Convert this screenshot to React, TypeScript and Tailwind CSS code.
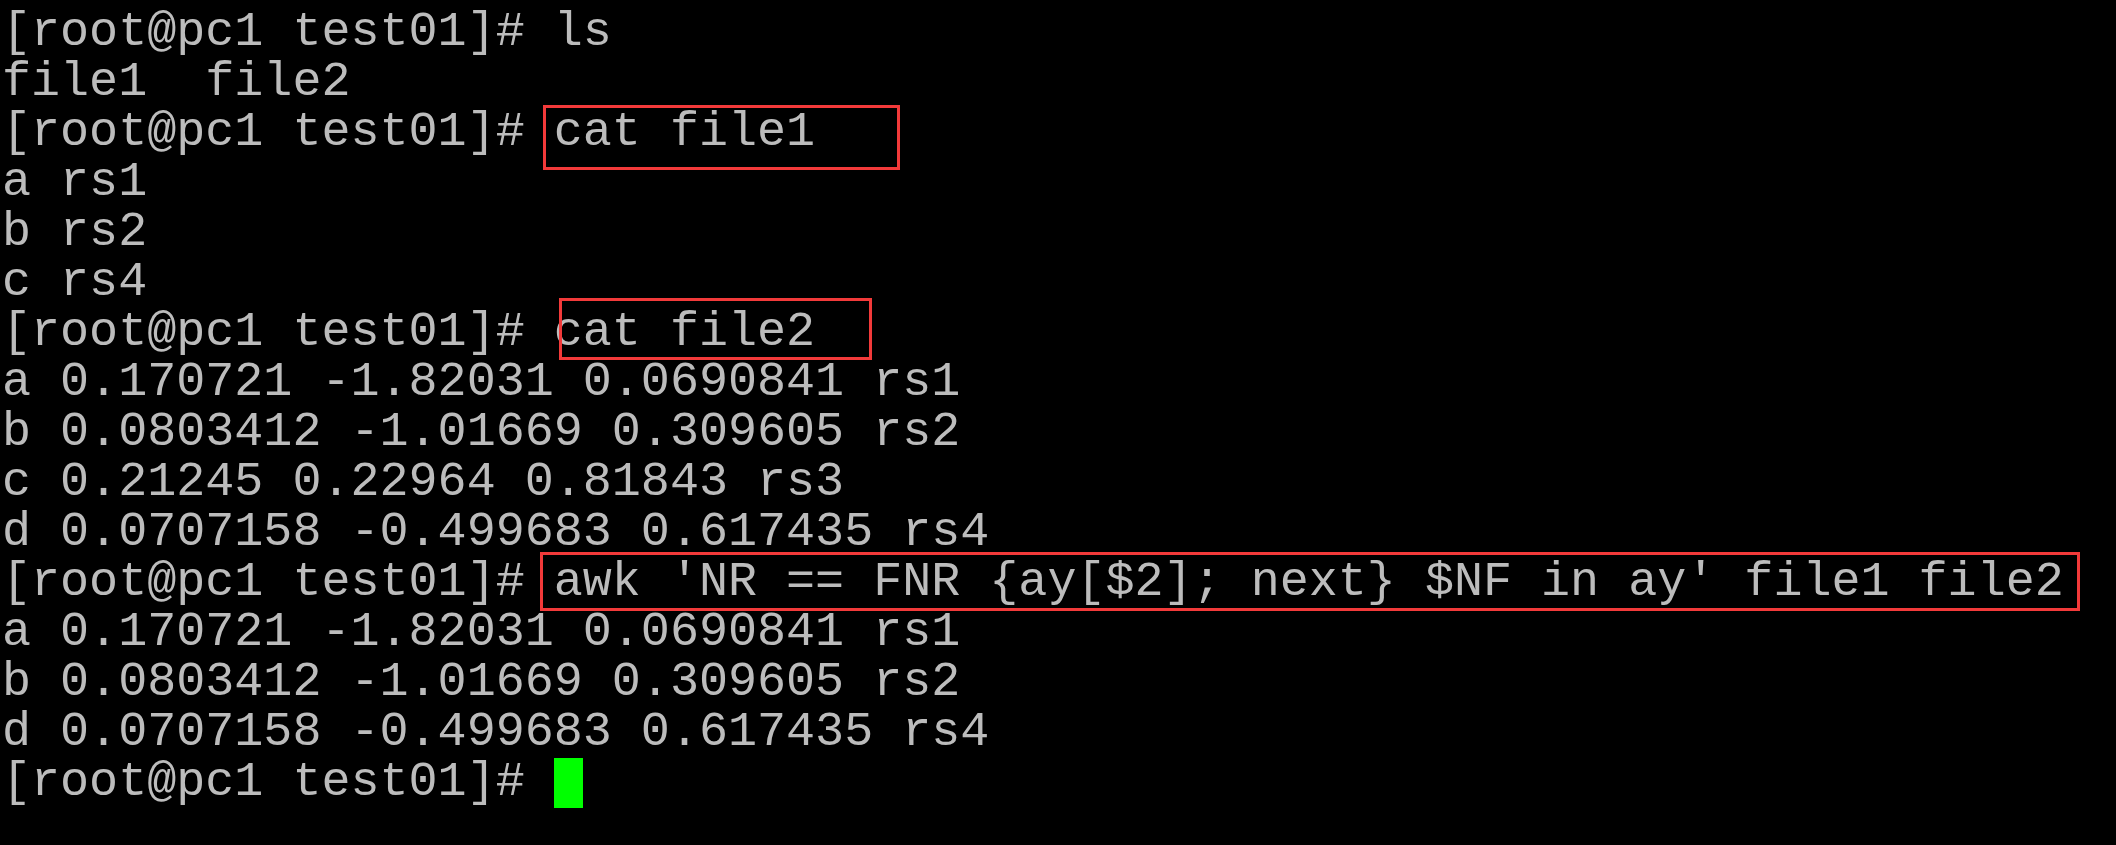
const lines = [
  "[root@pc1 test01]# ls",
  "file1  file2",
  "[root@pc1 test01]# cat file1",
  "a rs1",
  "b rs2",
  "c rs4",
  "[root@pc1 test01]# cat file2",
  "a 0.170721 -1.82031 0.0690841 rs1",
  "b 0.0803412 -1.01669 0.309605 rs2",
  "c 0.21245 0.22964 0.81843 rs3",
  "d 0.0707158 -0.499683 0.617435 rs4",
  "[root@pc1 test01]# awk 'NR == FNR {ay[$2]; next} $NF in ay' file1 file2",
  "a 0.170721 -1.82031 0.0690841 rs1",
  "b 0.0803412 -1.01669 0.309605 rs2",
  "d 0.0707158 -0.499683 0.617435 rs4",
];

export default function App() {
  return (
    <div className="w-[2116px] h-[845px] bg-black overflow-hidden">
      <div className="relative pt-[8px] pl-[2px] font-['Liberation_Mono','Courier_New',monospace] text-[48.4px] leading-[50px] text-[#bcbcbc] whitespace-pre">
        {lines.map((l, i) => (
          <div key={i}>{l}</div>
        ))}
        <div className="flex items-center">
          <span>[root@pc1 test01]# </span>
          <span className="inline-block w-[29px] h-[50px] bg-[#00ff00]" />
        </div>

        {/* red annotation boxes */}
        <div className="absolute left-[543px] top-[105px] w-[357px] h-[65px] border-[3px] border-[#f23a3a]" />
        <div className="absolute left-[559px] top-[298px] w-[313px] h-[62px] border-[3px] border-[#f23a3a]" />
        <div className="absolute left-[540px] top-[552px] w-[1540px] h-[59px] border-[3px] border-[#f23a3a]" />
      </div>
    </div>
  );
}
